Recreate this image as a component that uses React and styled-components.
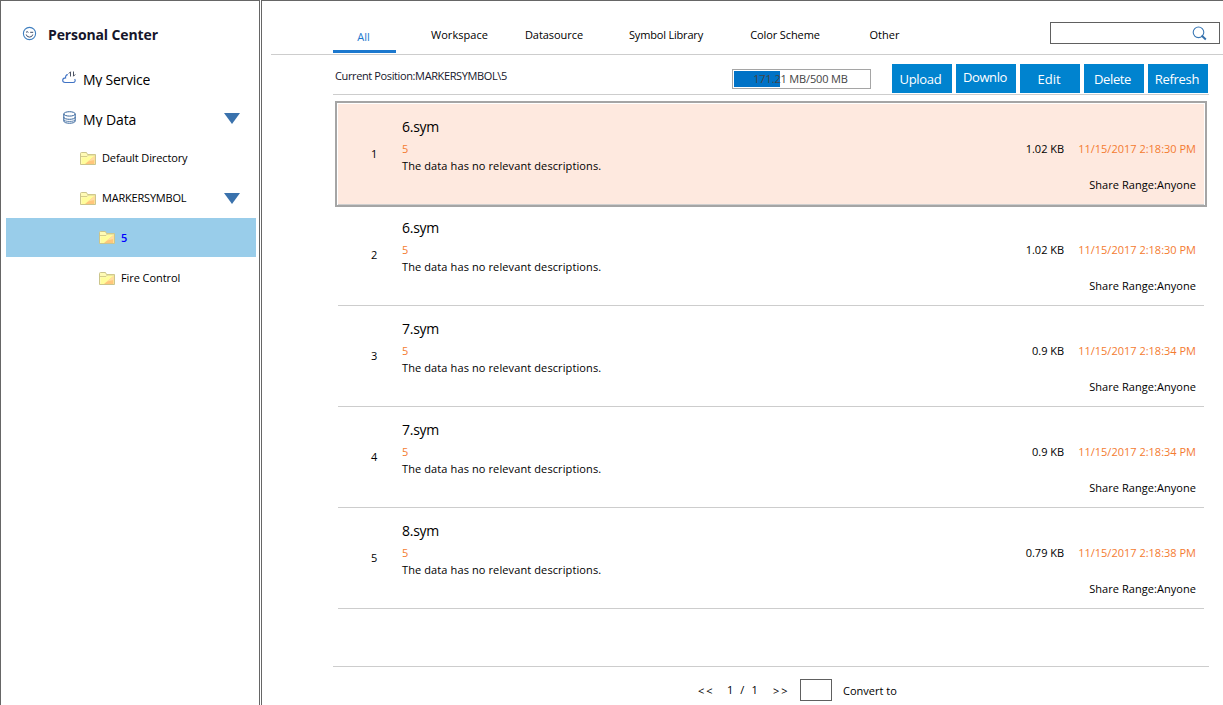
import React from "react";
import styled, { createGlobalStyle } from "styled-components";

const Global = createGlobalStyle`
  * { box-sizing: border-box; }
  body { margin: 0; background: #fff; overflow: hidden; font-family: "Open Sans", "Noto Sans", sans-serif; font-size: 11px; color: #000; }
`;

const Page = styled.div`
  display: flex;
  gap: 1px;
  width: 1223px;
  height: 705px;
  background: #fff;
`;
const Sidebar = styled.aside`
  display: flex;
  flex-direction: column;
  width: 260px;
  border: 1px solid #666;
  border-bottom: 0;
`;
const Main = styled.main`
  flex: 1;
  min-width: 0;
  display: flex;
  flex-direction: column;
  border-left: 1px solid #666;
  border-top: 1px solid #666;
`;

const Label = styled.span`
  display: block;
  white-space: nowrap;
  font-size: ${(p) => p.$size || 11}px;
  line-height: ${(p) => p.$lh || 16}px;
  font-weight: ${(p) => p.$weight || 400};
  letter-spacing: ${(p) => p.$ls || 0}px;
  color: ${(p) => p.$color || "#000"};
`;

const Brand = styled.header`
  display: flex;
  align-items: flex-start;
  height: 57px;
  padding: 24px 0 0 21px;
  gap: 11px;
  > svg { margin-top: 1px; }
`;
const TreeItem = styled.div`
  display: flex;
  align-items: center;
  height: ${(p) => p.$h || 40}px;
  margin: 0 3px 0 5px;
  padding-left: ${(p) => p.$indent}px;
  gap: ${(p) => p.$gap || 6}px;
  background: ${(p) => (p.$active ? "#99cdea" : "transparent")};
`;
const ClippedLabel = styled(Label)`
  height: 15px;
  overflow: hidden;
  margin-top: 3px;
`;
const Arrow = styled.svg`
  margin-left: auto;
  margin-right: 16px;
`;
const SmallIcon = styled.svg`
  margin-bottom: 1px;
`;

const Tabs = styled.nav`
  display: flex;
  align-items: flex-start;
  height: 54px;
  margin-left: 9px;
  padding-left: 62px;
  border-bottom: 1px solid #cdcdcd;
`;
const Tab = styled.div`
  display: flex;
  justify-content: center;
  width: ${(p) => p.$w}px;
  height: 52px;
  padding-top: ${(p) => (p.$active ? 28 : 26)}px;
  padding-right: ${(p) => (p.$active ? 2 : 0)}px;
  border-bottom: 3px solid ${(p) => (p.$active ? "#1c78ce" : "transparent")};
`;
const Search = styled.div`
  display: flex;
  align-items: center;
  justify-content: flex-end;
  width: 170px;
  height: 22px;
  margin: 21px 3px 0 auto;
  padding-right: 12px;
  border: 1px solid #606060;
`;

const Toolbar = styled.div`
  display: flex;
  align-items: flex-start;
  height: 40px;
  width: 876px;
  margin-left: 71px;
  padding: 9px 1px 0 2px;
  border-bottom: 1px solid #cdcdcd;
`;
const Quota = styled.div`
  display: grid;
  width: 139px;
  height: 20px;
  margin: 5px 21px 0 auto;
  padding: 1px;
  border: 1px solid #a5a5a5;
  > * { grid-area: 1 / 1; }
`;
const QuotaFill = styled.div`
  width: 46px;
  height: 16px;
  background: #0072c6;
`;
const QuotaText = styled(Label)`
  justify-self: center;
  margin-right: 2px;
`;
const Buttons = styled.div`
  display: flex;
  gap: 4px;
`;
const Button = styled.button`
  display: flex;
  justify-content: center;
  width: 60px;
  height: 29px;
  padding: ${(p) => (p.$raised ? 4 : 6)}px ${(p) => (p.$shift || 0)}px 0 0;
  border: 0;
  font: inherit;
  background: #0083cf;
`;

const List = styled.div`
  display: flex;
  flex-direction: column;
  height: 572px;
  width: 876px;
  margin-left: 71px;
  padding: 6px 0 0 2px;
  border-bottom: 1px solid #cdcdcd;
`;
const Frame = styled.div`
  width: 872px;
  height: 106px;
  flex: none;
  margin-bottom: -5px;
  padding: 1px 1px 0;
  border: 2px solid ${(p) => (p.$active ? "#a5a5a5" : "transparent")};
`;
const Row = styled.div`
  display: flex;
  height: 101px;
  border-bottom: 1px solid #cdcdcd;
  background: ${(p) => (p.$active ? "#fee9df" : "transparent")};
`;
const Index = styled.div`
  width: 64px;
  padding: 42px 0 0 33px;
`;
const Info = styled.div`
  padding-top: 13px;
`;
const Meta = styled.div`
  display: flex;
  flex-direction: column;
  align-items: flex-end;
  gap: 20px;
  margin-left: auto;
  padding: 37px 8px 0 0;
`;
const MetaLine = styled.div`
  display: flex;
  gap: 14px;
`;

const Pager = styled.footer`
  display: flex;
  align-items: flex-start;
  padding: 12px 0 0 436px;
`;
const PagerCell = styled.div`
  width: ${(p) => p.$w}px;
  padding-top: ${(p) => p.$top || 4}px;
`;
const PageInput = styled.div`
  width: 32px;
  height: 22px;
  margin-right: 11px;
  border: 1px solid #606060;
`;

const Smile = () => (
  <svg width="15" height="15" viewBox="0 0 15 15" fill="none">
    <circle cx="7.5" cy="7.5" r="6.1" stroke="#3f7fc0" strokeWidth="1.1" />
    <path d="M4 6.4q1.1-1.6 2.4 0M8.2 6.3h3M4.2 8.5q.6 2.6 3.3 2.6t3.3-2.6" stroke="#3d4a66" />
  </svg>
);
const Cloud = () => (
  <SmallIcon width="14" height="13" viewBox="0 0 14 13" fill="none">
    <path d="M5.8 3.6C4.2 3.7 3.4 5 3.6 6.9 1.8 7 .7 8 .7 9.3c0 1.3 1 2.2 2.4 2.2h8c2 0 2.6-2 1.5-3.3" stroke="#3f72c4" strokeWidth="1.1" />
    <path d="M8.5 5.5V.8M6.8 2.6l1.7-1.8M11.5.5v4.7M11.5 5.2l1.8-1.8" stroke="#4b5263" />
  </SmallIcon>
);
const Database = () => (
  <SmallIcon width="13" height="13" viewBox="0 0 13 13" fill="none" stroke="#37669d">
    <ellipse cx="6.5" cy="2.9" rx="5.7" ry="2.2" />
    <path d="M.8 3v7c0 3 11.4 3 11.4 0V3M.8 6.2c0 2.8 11.4 2.8 11.4 0" />
    <path d="M1 8.8c0 2.2 11 2.2 11 0" strokeWidth=".8" />
  </SmallIcon>
);
const Folder = () => (
  <svg width="16" height="13" viewBox="0 0 16 13">
    <path d="M.5 1.5q0-1 1-1h5l1 2h8v10H.5z" fill="#fffbb5" stroke="#cbc58c" />
    <path d="M1 4.5h6L8.5 3H15" fill="none" stroke="#d5cd8c" />
    <path d="M2 5.5h5.5L9 4h5.5v8H2z" fill="#fffd9c" />
    <path d="M5 12l9.5-8v8z" fill="#ffc67c" />
    <path d="M8 9.5L14.5 4v4z" fill="#ffdca4" />
  </svg>
);
const Down = () => (
  <Arrow width="16" height="11" viewBox="0 0 16 11">
    <path d="M0 0h16L8 11z" fill="#3a72ad" />
  </Arrow>
);
const Magnifier = () => (
  <svg width="15" height="15" viewBox="0 0 15 15" fill="none">
    <circle cx="6.5" cy="6.3" r="5.3" stroke="#3a78b5" strokeWidth="1.1" />
    <path d="M9.6 9.6l4.2 3.8" stroke="#3470ab" strokeWidth="2" />
  </svg>
);

const files = [
  ["6.sym", "1.02 KB", "11/15/2017 2:18:30 PM"],
  ["6.sym", "1.02 KB", "11/15/2017 2:18:30 PM"],
  ["7.sym", "0.9 KB", "11/15/2017 2:18:34 PM"],
  ["7.sym", "0.9 KB", "11/15/2017 2:18:34 PM"],
  ["8.sym", "0.79 KB", "11/15/2017 2:18:38 PM"],
];
const tabs = [
  ["Workspace", 127, 0.05],
  ["Datasource", 62, -0.05],
  ["Symbol Library", 162, -0.18],
  ["Color Scheme", 76, -0.1],
  ["Other", 123, 0],
];
const actions = [
  ["Upload", -0.3, 3],
  ["Downlo", -0.4, 2],
  ["Edit", 0, 2],
  ["Delete", -0.4, 3],
  ["Refresh", -0.3, 2],
];
const ORANGE = "#f47b30";

export default function App() {
  return (
    <Page>
      <Global />
      <Sidebar>
        <Brand>
          <Smile />
          <Label $size={14} $lh={20} $weight={700} $ls={-0.12} $color="#16162b">Personal Center</Label>
        </Brand>
        <TreeItem $indent={56} $gap={7}><Cloud /><ClippedLabel $size={14} $lh={16} $ls={-0.25}>My Service</ClippedLabel></TreeItem>
        <TreeItem $indent={57} $gap={7}><Database /><ClippedLabel $size={14} $lh={16} $ls={-0.1}>My Data</ClippedLabel><Down /></TreeItem>
        <TreeItem $indent={74}><Folder /><Label $ls={-0.12}>Default Directory</Label></TreeItem>
        <TreeItem $indent={74}><Folder /><Label $ls={-0.2}>MARKERSYMBOL</Label><Down /></TreeItem>
        <TreeItem $indent={93} $h={39} $active><Folder /><Label $weight={600} $color="#0000ff">5</Label></TreeItem>
        <TreeItem $indent={93} $h={42}><Folder /><Label $ls={-0.08}>Fire Control</Label></TreeItem>
      </Sidebar>
      <Main>
        <Tabs>
          <Tab $w={63} $active><Label $color="#1c78ce">All</Label></Tab>
          {tabs.map(([name, w, ls]) => (
            <Tab key={name} $w={w}><Label $ls={ls}>{name}</Label></Tab>
          ))}
          <Search><Magnifier /></Search>
        </Tabs>
        <Toolbar>
          <Label $color="#16162b" $lh={24} $ls={-0.38}>Current Position:MARKERSYMBOL\5</Label>
          <Quota>
            <QuotaFill />
            <QuotaText $color="#444" $ls={-0.15}>171.21 MB/500 MB</QuotaText>
          </Quota>
          <Buttons>
            {actions.map(([name, ls, shift]) => (
              <Button key={name} $raised={name === "Downlo"} $shift={shift}>
                <Label $size={13} $lh={18} $ls={ls} $color="#fff">{name}</Label>
              </Button>
            ))}
          </Buttons>
        </Toolbar>
        <List>
          {files.map(([name, size, date], i) => (
            <Frame key={i} $active={i === 0}>
              <Row $active={i === 0}>
                <Index><Label>{i + 1}</Label></Index>
                <Info>
                  <Label $size={14} $lh={20} $ls={-0.25}>{name}</Label>
                  <Label $color={ORANGE} $lh={24}>5</Label>
                  <Label $lh={10} $ls={0.11}>The data has no relevant descriptions.</Label>
                </Info>
                <Meta>
                  <MetaLine>
                    <Label>{size}</Label>
                    <Label $color={ORANGE}>{date}</Label>
                  </MetaLine>
                  <Label $ls={0.05}>Share Range:Anyone</Label>
                </Meta>
              </Row>
            </Frame>
          ))}
        </List>
        <Pager>
          <PagerCell $w={29}><Label $ls={2}>&lt;&lt;</Label></PagerCell>
          <PagerCell $w={46} $top={3}><Label $ls={2.1}>1 / 1</Label></PagerCell>
          <PagerCell $w={27}><Label $ls={2}>&gt;&gt;</Label></PagerCell>
          <PageInput />
          <PagerCell $w={60}><Label>Convert to</Label></PagerCell>
        </Pager>
      </Main>
    </Page>
  );
}
